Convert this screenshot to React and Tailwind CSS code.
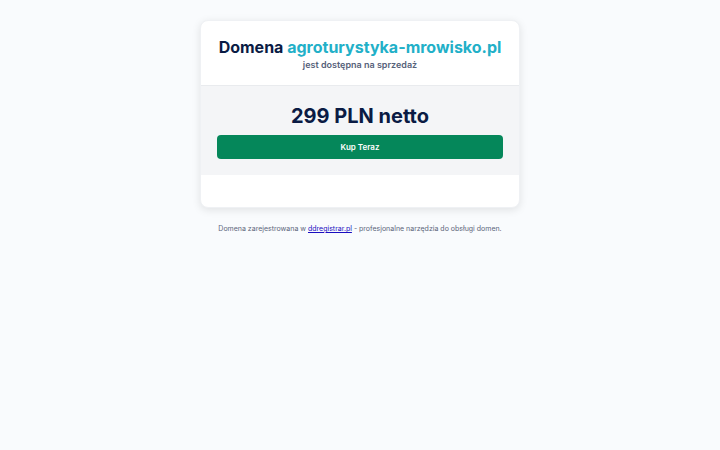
import React from "react";

const App = () => {
  return (
    <div className="min-h-screen bg-[#f9fbfd] px-5 py-5 font-['Inter',sans-serif]">
      <main className="mx-auto w-full max-w-80 overflow-hidden rounded-lg border border-[#eff1f4] bg-white text-center shadow-[0_2px_8px_rgba(0,0,0,0.1)]">
        <header className="border-b border-[#e9ebee] px-4 pt-4 pb-3">
          <h1 className="text-base leading-5 font-bold whitespace-nowrap text-[#0a1b44]">
            Domena <span className="text-[#22b0c8]">agroturystyka-mrowisko.pl</span>
          </h1>
          <p className="text-[9px] leading-4 font-semibold text-[#56617a]">
            jest dostępna na sprzedaż
          </p>
        </header>

        <section className="bg-[#f4f5f7] p-4">
          <p className="text-xl leading-7 font-bold text-[#0a1b44]">299 PLN netto</p>
          <button
            type="button"
            className="mt-[5px] block h-6 w-full cursor-pointer rounded bg-[#05875a] text-[8px] font-semibold text-white"
          >
            Kup Teraz
          </button>
        </section>

        <div className="h-8" />
      </main>

      <footer className="mt-4 text-center text-[7px] text-[#5b657a]">
        Domena zarejestrowana w{" "}
        <a href="https://ddregistrar.pl" className="text-[#1a0dc0] underline">
          ddregistrar.pl
        </a>{" "}
        - profesjonalne narzędzia do obsługi domen.
      </footer>
    </div>
  );
};

export default App;
